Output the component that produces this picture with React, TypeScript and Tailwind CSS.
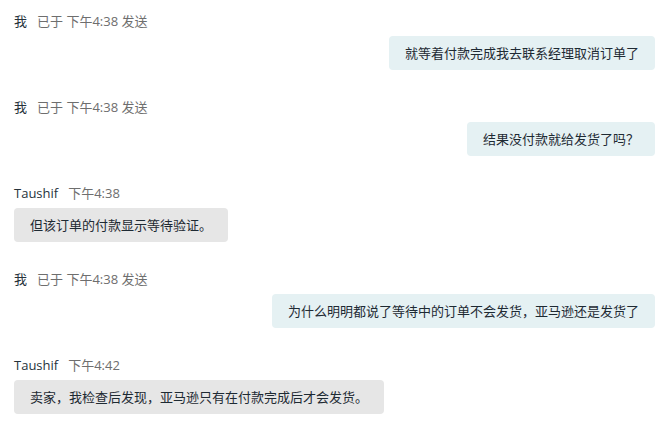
import React from "react";

type Msg = { mine: boolean; name: string; time: string; text: string };

const msgs: Msg[] = [
  { mine: true, name: "我", time: "已于 下午4:38 发送", text: "就等着付款完成我去联系经理取消订单了" },
  { mine: true, name: "我", time: "已于 下午4:38 发送", text: "结果没付款就给发货了吗？" },
  { mine: false, name: "Taushif", time: "下午4:38", text: "但该订单的付款显示等待验证。" },
  { mine: true, name: "我", time: "已于 下午4:38 发送", text: "为什么明明都说了等待中的订单不会发货，亚马逊还是发货了" },
  { mine: false, name: "Taushif", time: "下午4:42", text: "卖家，我检查后发现，亚马逊只有在付款完成后才会发货。" },
];

export default function App() {
  return (
    <div
      className="w-[670px] h-[429px] bg-white overflow-hidden pl-[14px] pr-[15px] pt-[12px] flex flex-col gap-[28px]"
      style={{ fontFamily: '"Open Sans", "Noto Sans CJK SC", sans-serif' }}
    >
      {msgs.map((m, i) => (
        <div key={i} className="flex flex-col gap-[6px]">
          <div className="flex items-center gap-[10px] text-[13px] leading-[18px]">
            <span className="text-[#26323b]">{m.name}</span>
            <span className="text-[#6e6e6e]">{m.time}</span>
          </div>
          <div className={m.mine ? "flex justify-end" : "flex justify-start"}>
            <div
              className={
                "rounded-[4px] px-[16px] py-[8px] text-[13px] leading-[18px] text-[#1e2a33] " +
                (m.mine ? "bg-[#e5f1f3]" : "bg-[#e6e6e6]")
              }
            >
              {m.text}
            </div>
          </div>
        </div>
      ))}
    </div>
  );
}
